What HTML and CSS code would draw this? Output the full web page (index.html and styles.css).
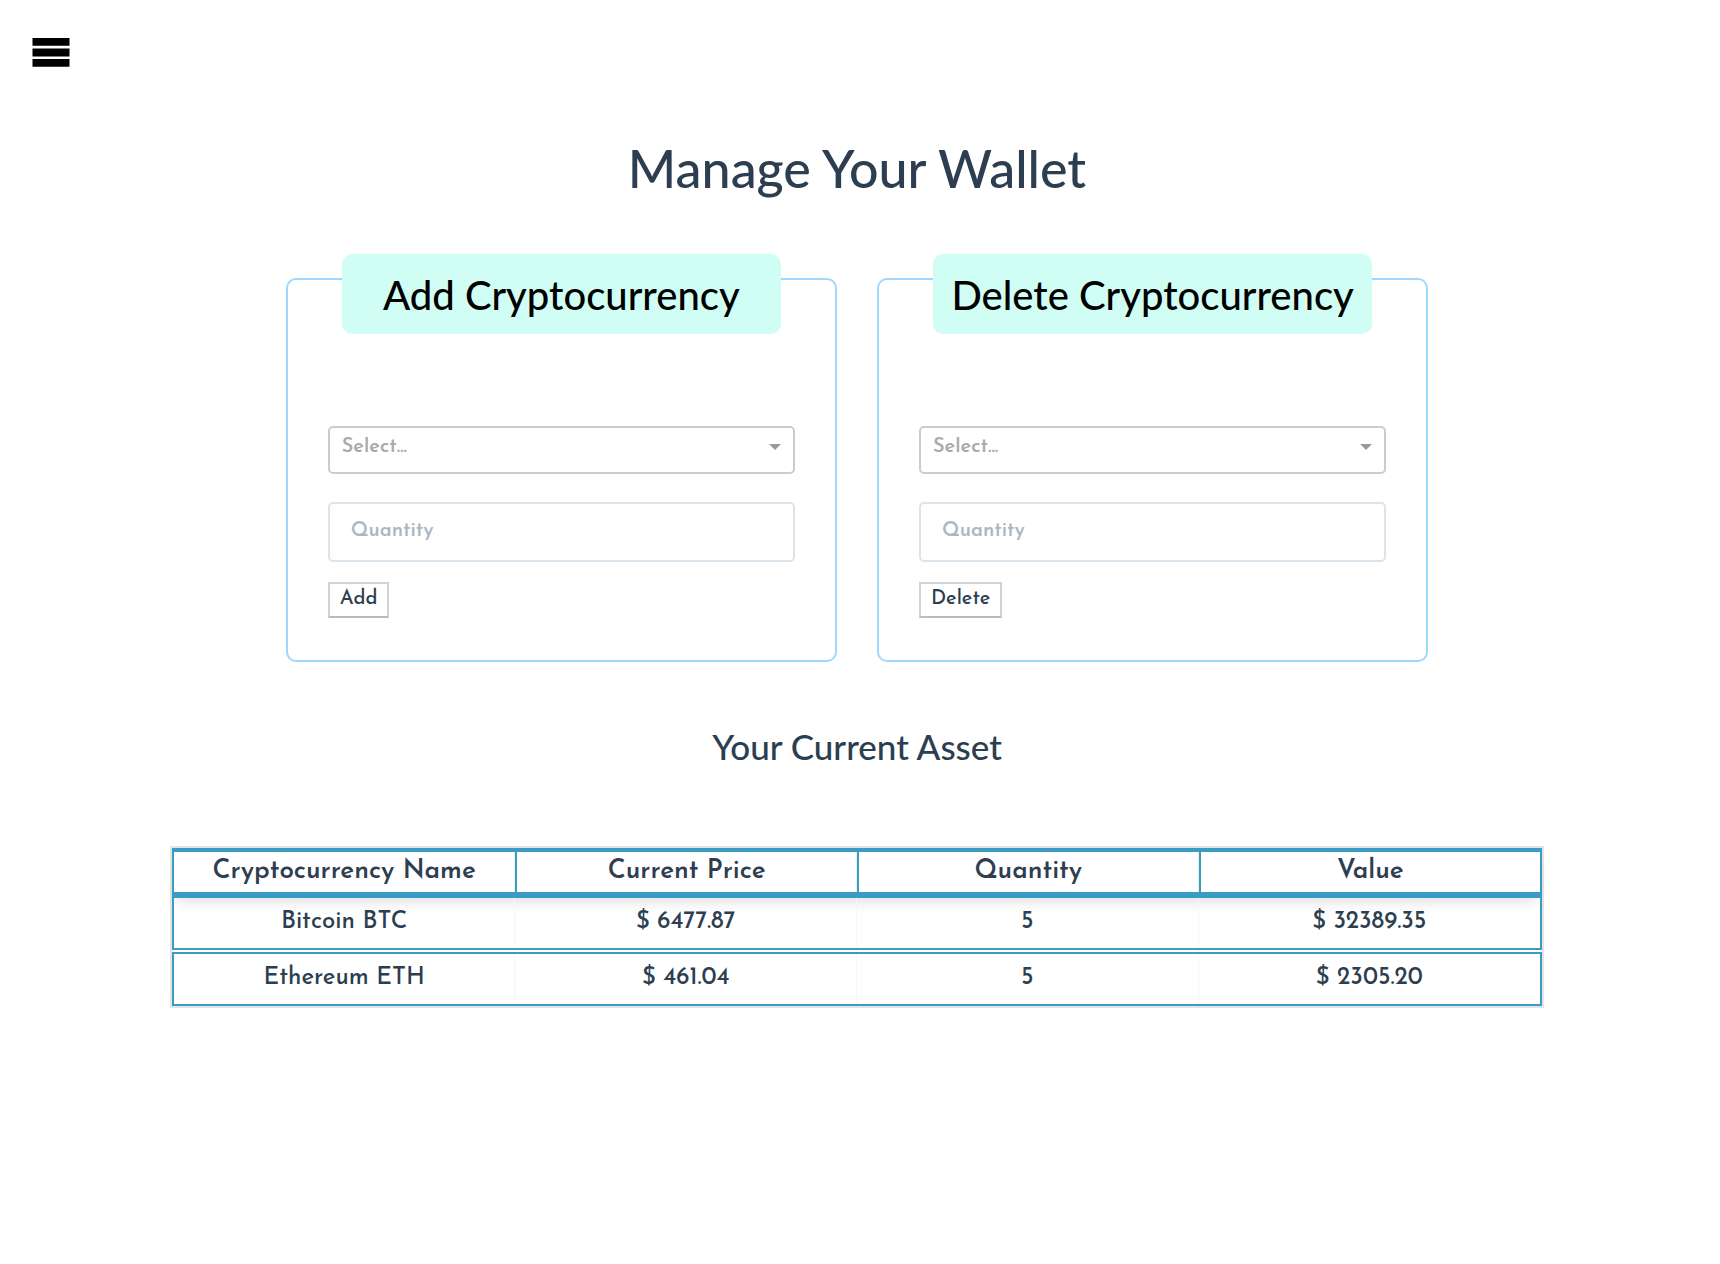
FILE: index.html
```html
<!DOCTYPE html>
<html lang="en">
<head>
<meta charset="utf-8">
<meta name="viewport" content="width=device-width, initial-scale=1">
<title>Manage Your Wallet</title>
<link rel="stylesheet" href="styles.css">
</head>
<body>
<header class="topbar">
  <button class="menu-button" type="button" aria-label="Open menu">
    <svg width="38" height="30" viewBox="0 0 38 30" aria-hidden="true">
      <path d="M.5 0h37v7.8H.5zM.5 10.4h37v8H.5zM.5 21h37v7.7H.5z"/>
    </svg>
  </button>
</header>
<main class="page">
  <h1 class="page-title">Manage Your Wallet</h1>
  <div class="cards">
    <form class="card">
      <h2 class="card-title">Add Cryptocurrency</h2>
      <div class="select-wrap">
        <select class="select" aria-label="Cryptocurrency to add"><option>Select...</option></select>
      </div>
      <input class="quantity" type="text" placeholder="Quantity" aria-label="Quantity to add">
      <button class="action" type="button">Add</button>
    </form>
    <form class="card">
      <h2 class="card-title">Delete Cryptocurrency</h2>
      <div class="select-wrap">
        <select class="select" aria-label="Cryptocurrency to delete"><option>Select...</option></select>
      </div>
      <input class="quantity" type="text" placeholder="Quantity" aria-label="Quantity to delete">
      <button class="action" type="button">Delete</button>
    </form>
  </div>
  <h2 class="section-title">Your Current Asset</h2>
  <table class="assets">
    <thead>
      <tr><th scope="col">Cryptocurrency Name</th><th scope="col">Current Price</th><th scope="col">Quantity</th><th scope="col">Value</th></tr>
    </thead>
    <tbody>
      <tr><td>Bitcoin BTC</td><td>$ 6477.87</td><td>5</td><td>$ 32389.35</td></tr>
      <tr><td>Ethereum ETH</td><td>$ 461.04</td><td>5</td><td>$ 2305.20</td></tr>
    </tbody>
  </table>
</main>
</body>
</html>
```
FILE: styles.css
```css
* { box-sizing: border-box; }

body {
  margin: 0;
  padding-right: 6px;
  background: #fff;
  color: #2c3e50;
  font-family: "Josefin Sans", Lato, sans-serif;
}

h1, h2 {
  margin: 0;
  font-family: Lato, sans-serif;
  font-weight: 500;
  text-align: center;
}

.topbar { padding: 38px 32px 0; }

.menu-button {
  display: block;
  padding: 0;
  border: 0;
  background: none;
  cursor: pointer;
}

.menu-button svg { display: block; }

.page-title {
  margin-top: 68px;
  font-size: 52px;
  line-height: 64px;
}

.cards {
  display: grid;
  grid-template-columns: 1fr 1fr;
  gap: 40px;
  width: 66.66%;
  margin: 78px auto 0;
}

.card {
  display: flex;
  flex-direction: column;
  align-items: stretch;
  padding: 0 40px 42px;
  border: 2px solid #9dd9ff;
  border-radius: 10px;
}

.card-title {
  margin: -26px 14px 92px;
  padding-top: 2px;
  border-radius: 10px;
  background: #d0fef5;
  color: #000;
  font-size: 40px;
  line-height: 78px;
  white-space: nowrap;
}

.select-wrap {
  display: grid;
  align-items: center;
  margin-bottom: 28px;
}

.select-wrap::after {
  content: "";
  grid-area: 1 / 1;
  justify-self: end;
  margin: 0 14px 6px 0;
  border: 6px solid transparent;
  border-top-color: #999;
  border-bottom: 0;
  pointer-events: none;
}

.select {
  grid-area: 1 / 1;
  width: 100%;
  height: 48px;
  padding: 0 40px 6px 12px;
  border: 2px solid #ccc;
  border-radius: 5px;
  background: none;
  color: #aaa;
  font: 600 20px "Josefin Sans", Lato, sans-serif;
  appearance: none;
}

.quantity {
  width: 100%;
  height: 60px;
  padding: 0 21px 2px;
  border: 2px solid #dae4ed;
  border-radius: 5px;
  background: none;
  color: inherit;
  font: 600 20px "Josefin Sans", Lato, sans-serif;
}

.quantity::placeholder { color: #adb7c1; opacity: 1; }

.action {
  align-self: flex-start;
  height: 36px;
  margin-top: 20px;
  padding: 0 10px 2px;
  border: 2px solid #d3d3d3;
  border-bottom-color: #bababa;
  background: none;
  color: inherit;
  font: 500 20px "Josefin Sans", Lato, sans-serif;
}

.section-title {
  margin-top: 62px;
  font-size: 35px;
  line-height: 44px;
}

.assets {
  display: block;
  width: calc(80% + 3px);
  margin: 78px auto 0;
  border: 2px solid #e2e4e5;
  text-align: center;
}

.assets thead {
  display: block;
  box-shadow: 0 10px 14px -6px rgba(0, 0, 0, 0.12);
}

.assets tbody {
  display: grid;
  gap: 2px;
}

.assets tr {
  display: grid;
  grid-template-columns: repeat(4, 1fr);
  border: 2px solid #3b9cc3;
}

.assets thead tr { border-width: 4px 2px 6px; }

.assets tbody tr:first-child { border-top: 0; }

.assets th {
  padding: 3px 0;
  border-right: 1px solid #e8f0f4;
  font-size: 26px;
  font-weight: 600;
  line-height: 34px;
}

.assets th + th { border-left: 2px solid #3b9cc3; }

.assets td {
  padding: 7px 0 9px;
  border-right: 1px solid #f6f6f6;
  font-size: 24px;
  font-weight: 500;
  line-height: 34px;
}

.assets th:last-child,
.assets td:last-child { border-right: 0; }
```
